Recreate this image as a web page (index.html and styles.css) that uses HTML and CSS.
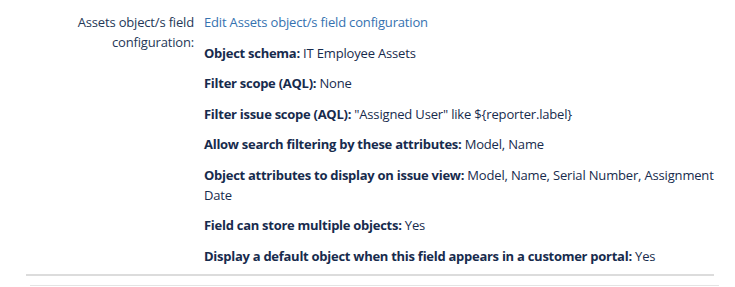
FILE: index.html
```html
<!DOCTYPE html>
<html lang="en">

<head>
  <meta charset="UTF-8">
  <title>Assets field configuration</title>
  <link rel="stylesheet" href="styles.css">
</head>

<body class="page">
  <div class="field-row">
    <div class="field-label">Assets object/s field configuration:</div>
    <div class="field-value">
      <a class="edit-link" href="#">Edit Assets object/s field configuration</a>
      <p><b>Object schema:</b> IT Employee Assets</p>
      <p><b>Filter scope (AQL):</b> None</p>
      <p><b>Filter issue scope (AQL):</b> "Assigned User" like ${reporter.label}</p>
      <p><b>Allow search filtering by these attributes:</b> Model, Name</p>
      <p><b>Object attributes to display on issue view:</b> Model, Name, Serial Number, Assignment Date</p>
      <p><b>Field can store multiple objects:</b> Yes</p>
      <p><b>Display a default object when this field appears in a customer portal:</b> Yes</p>
    </div>
  </div>
  <div class="divider"></div>
  <div class="divider next"></div>
</body>

</html>
```

FILE: styles.css
```css
.page {
  margin: 0;
  padding: 12px 0 0 0;
  font-family: "Open Sans", "Noto Sans", sans-serif;
  font-size: 13px;
  line-height: 20px;
  letter-spacing: -0.17px;
  color: #172b4d;
  background-color: #fff;
}

.field-row {
  display: grid;
  grid-template-columns: 194px 512px;
  column-gap: 10px;
}

.field-label {
  text-align: right;
  padding-left: 70px;
  color: #253858;
}

.field-value p {
  margin: 10.5px 0 0 0;
}

.field-value b {
  font-weight: 700;
  letter-spacing: -0.27px;
}

.edit-link {
  color: #3572b0;
  text-decoration: none;
}

.divider {
  margin: 8px 21px 0 26px;
  height: 2px;
  background-color: #dcdcdc;
}

.divider.next {
  margin: 9px 16px 0 30px;
  height: 1px;
  background-color: #e4e4e4;
}
```
